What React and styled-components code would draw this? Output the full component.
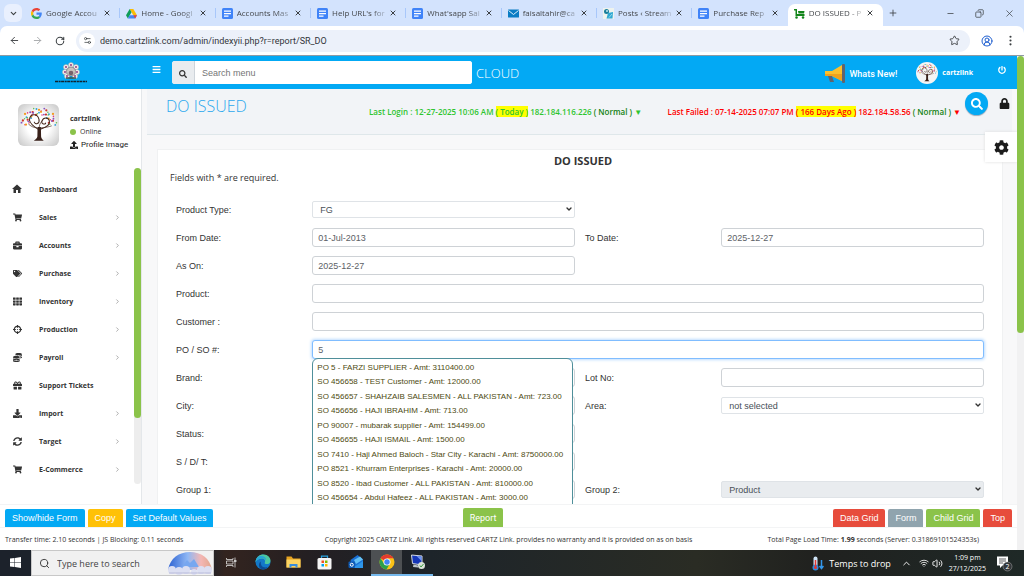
import { useState } from 'react'
import styled, { createGlobalStyle, css } from 'styled-components'
import {
  FaShoppingCart, FaBriefcase, FaTags, FaTh, FaCrosshairs, FaCoins, FaGift, FaDownload,
  FaSyncAlt, FaUpload, FaSearch, FaBars, FaPowerOff, FaLock, FaCog,
} from 'react-icons/fa'
import { MdHome } from 'react-icons/md'
import {
  ArrowLeft, ArrowRight, RotateCw, Star, CircleUserRound, EllipsisVertical, ChevronDown, ChevronUp,
  ChevronRight, X, Plus, Minus, Copy, Settings2, Search, Wifi, Volume2,
} from 'lucide-react'

const tabs = [
  { icon: 'google', title: 'Google Accou' },
  { icon: 'drive', title: 'Home - Googl' },
  { icon: 'docs', title: 'Accounts Mas' },
  { icon: 'docs', title: "Help URL's for" },
  { icon: 'docs', title: "What'sapp Sal" },
  { icon: 'mail', title: 'faisaltahir@ca' },
  { icon: 'posts', title: 'Posts ‹ Stream' },
  { icon: 'docs', title: 'Purchase Rep' },
  { icon: 'cart', title: 'DO ISSUED - P', active: true },
]

const menu = [
  { icon: MdHome, name: 'Dashboard', size: 12 },
  { icon: FaShoppingCart, name: 'Sales', more: true },
  { icon: FaBriefcase, name: 'Accounts', more: true },
  { icon: FaTags, name: 'Purchase', more: true },
  { icon: FaTh, name: 'Inventory', more: true },
  { icon: FaCrosshairs, name: 'Production', more: true },
  { icon: FaCoins, name: 'Payroll', more: true },
  { icon: FaGift, name: 'Support Tickets' },
  { icon: FaDownload, name: 'Import', more: true },
  { icon: FaSyncAlt, name: 'Target', more: true },
  { icon: FaShoppingCart, name: 'E-Commerce', more: true },
]

const suggestions = [
  'PO 5 - FARZI SUPPLIER - Amt: 3110400.00',
  'SO 456658 - TEST Customer - Amt: 12000.00',
  'SO 456657 - SHAHZAIB SALESMEN - ALL PAKISTAN - Amt: 723.00',
  'SO 456656 - HAJI IBRAHIM - Amt: 713.00',
  'PO 90007 - mubarak supplier - Amt: 154499.00',
  'SO 456655 - HAJI ISMAIL - Amt: 1500.00',
  'SO 7410 - Haji Ahmed Baloch - Star City - Karachi - Amt: 8750000.00',
  'PO 8521 - Khurram Enterprises - Karachi - Amt: 20000.00',
  'SO 8520 - Ibad Customer - ALL PAKISTAN - Amt: 810000.00',
  'SO 456654 - Abdul Hafeez - ALL PAKISTAN - Amt: 3000.00',
]

function Favicon({ kind }) {
  if (kind === 'google') return (
    <svg width="11" height="11" viewBox="0 0 48 48">
      <path fill="#EA4335" d="M24 9.500c3.500 0 6.700 1.200 9.200 3.600l6.900-6.900C35.900 2.400 30.500 0 24 0 14.600 0 6.500 5.400 2.600 13.200l8 6.200C12.400 13.700 17.700 9.500 24 9.500z" />
      <path fill="#4285F4" d="M47 24.500c0-1.600-.2-3.100-.4-4.500H24v9h12.900c-.6 3-2.200 5.500-4.700 7.200l7.700 6C44.400 38 47 31.800 47 24.500z" />
      <path fill="#FBBC05" d="M10.500 28.600a14.500 14.500 0 0 1 0-9.200l-8-6.200a24 24 0 0 0 0 21.600z" />
      <path fill="#34A853" d="M24 48c6.500 0 11.900-2.100 15.900-5.800l-7.700-6c-2.200 1.500-4.900 2.300-8.200 2.300-6.300 0-11.600-4.200-13.500-9.900l-8 6.200C6.500 42.600 14.600 48 24 48z" />
    </svg>
  )
  if (kind === 'drive') return (
    <svg width="11" height="11" viewBox="0 0 24 22">
      <path fill="#FBBC04" d="M8 1h8l8 14h-8z" />
      <path fill="#0F9D58" d="M8 1l4 7-8 14-4-7z" />
      <path fill="#4285F4" d="M8 15h16l-4 7H4z" />
      <path fill="#EA4335" d="M16 15h8l-4 7z" />
    </svg>
  )
  if (kind === 'docs') return (
    <svg width="11" height="11" viewBox="0 0 22 22">
      <rect width="22" height="22" rx="3" fill="#3f83f8" />
      <path d="M4 6h14M4 11h14M4 16h9" stroke="#fff" strokeWidth="2.500" />
    </svg>
  )
  if (kind === 'mail') return (
    <svg width="11" height="11" viewBox="0 0 22 22">
      <rect y="3" width="22" height="16" rx="1" fill="#0b7dc4" />
      <path d="M1 5l10 8 10-8" stroke="#d8eefb" strokeWidth="2" fill="none" />
    </svg>
  )
  if (kind === 'posts') return (
    <svg width="11" height="11" viewBox="0 0 22 22">
      <rect width="22" height="22" fill="#eef3ee" />
      <circle cx="7" cy="7" r="5" fill="#187e9b" />
      <circle cx="8" cy="6" r="2" fill="#bfe6ef" />
      <path d="M7 21l3-11 10-2-1 13z" fill="#2fa9d3" />
      <path d="M12 19l6-7" stroke="#fff" />
    </svg>
  )
  return (
    <svg width="11" height="11" viewBox="0 0 22 22">
      <path d="M0 2h6v10h15v4H3V5H0z" fill="#12851a" />
      <path d="M8 6h13l-1 5H9z" fill="#12851a" />
      <circle cx="5" cy="19" r="2.500" fill="#12851a" />
      <circle cx="18" cy="19" r="2.500" fill="#12851a" />
    </svg>
  )
}

const leafColors = ['#e6397b', '#f29a1f', '#2f9fd8', '#6abf4b', '#d0342c', '#8854c0']

// round crown: two arcs of leaves over a curled trunk
function Tree({ size }) {
  const leaves = []
  for (let i = 0; i < 46; i++) {
    const angle = Math.PI * (0.96 + (i % 23) / 22 * 1.08)
    const r = i < 23 ? 13 + (i * 7) % 4 : 9 + (i * 5) % 4
    leaves.push(
      <circle
        key={i}
        cx={20 + Math.cos(angle) * r * 1.15}
        cy={18 + Math.sin(angle) * r}
        r={0.8 + (i % 3) * 0.2}
        fill={leafColors[(i * 5) % 6]}
      />
    )
  }
  return (
    <svg width={size} height={size} viewBox="0 0 40 40">
      {leaves}
      <g fill="none" stroke="#46291c" strokeLinecap="round">
        <path d="M20 25c-3-2-9-5-10-10 0-7 8-8 10-1 1 5-4 6-5 3" strokeWidth="1.100" />
        <path d="M20 25c4-2 11-3 11-8 0-5-6-6-8-1-1 3 4 4 4 2" strokeWidth="1.100" />
        <path d="M20 25c0-4 1-7 3-9M18 23c-4 0-7-2-9-4M22 23c4 0 8-1 11-2" strokeWidth="0.700" />
      </g>
      <path d="M18.500 22h3.500l.2 10c.2 2 1.200 3 2.800 4.500H14.500c2-1.500 3.500-2.500 3.800-4.500z" fill="#39211a" />
    </svg>
  )
}

function CompanyLogo() {
  return (
    <svg width="34" height="22" viewBox="0 0 34 22">
      {[[17, 3], [12, 5], [22, 5], [11, 10], [23, 10], [13, 14], [21, 14]].map(([x, y]) => (
        <g key={x + '-' + y}>
          <circle cx={x} cy={y} r="2.600" fill="#efebe8" stroke="#a3a59d" strokeWidth="0.400" />
          <circle cx={x} cy={y} r="0.900" fill="#8a2878" />
        </g>
      ))}
      <circle cx="17" cy="9.500" r="4.500" fill="#c9c2be" stroke="#6d6566" strokeWidth="0.600" />
      <circle cx="17" cy="11" r="2.300" fill="#77616b" />
      <path d="M12 16h10" stroke="#3c5148" strokeWidth="1.500" />
      <path d="M1 19.500h32" stroke="#10222e" strokeWidth="1.700" strokeDasharray="3 0.600 2 0.500" />
    </svg>
  )
}

function Megaphone() {
  return (
    <svg width="22" height="22" viewBox="0 0 22 22">
      <path d="M4 13h4l2 6H6z" fill="#5f6470" />
      <path d="M1 8h7l10-6v16l-10-5H1z" fill="#fbc02d" />
      <path d="M1 11h17v7l-10-5H1z" fill="#f0a21c" />
      <rect x="18" y="1" width="3" height="19" rx="1" fill="#5f6470" />
    </svg>
  )
}

function WindowsLogo() {
  return (
    <svg width="11" height="11" viewBox="0 0 22 22" fill="#fff">
      <path d="M0 3l9-1v8H0zM10 2l12-2v10H10zM0 11h9v9l-9-1zM10 11h12v11l-12-2z" />
    </svg>
  )
}

function SearchArt() {
  return (
    <svg width="46" height="23" viewBox="0 0 46 23">
      <defs>
        <linearGradient id="sky" x1="0" x2="1">
          <stop offset="0" stopColor="#2d62d2" />
          <stop offset="0.450" stopColor="#8fb8f5" />
          <stop offset="0.750" stopColor="#f4b7b4" />
          <stop offset="1" stopColor="#e0a58c" />
        </linearGradient>
      </defs>
      <path d="M1 18C3 6 12 0 23 0s20 6 22 18z" fill="url(#sky)" />
      <path d="M15 15l5-7 3 3 4-4 5 8z" fill="#77a7f0" />
      <g fill="#dcdff2">
        <circle cx="5" cy="18" r="4" />
        <circle cx="12" cy="19" r="4" />
        <circle cx="19" cy="18" r="4" />
        <circle cx="27" cy="20" r="3" />
        <circle cx="34" cy="18" r="4" />
        <circle cx="41" cy="18" r="4" />
      </g>
      <path d="M2 21h42" stroke="#b8badb" />
    </svg>
  )
}

function TaskIcon({ kind }) {
  if (kind === 'view') return (
    <svg width="11" height="11" viewBox="0 0 22 22" fill="none" stroke="#e8e8e8" strokeWidth="1.500">
      <path d="M1 2v3h13V2M1 20v-3h13v3M1 8h13v6H1zM18 1v20" />
      <path d="M16 8h5" strokeWidth="3" />
    </svg>
  )
  if (kind === 'edge') return (
    <svg width="16" height="16" viewBox="0 0 32 32">
      <circle cx="16" cy="16" r="15" fill="#1378c8" />
      <path d="M1 16C2 6 9 1 17 1c9 0 14 7 14 12 0 6-5 8-9 7-3 0-3-2-2-4 1-3-1-7-6-7C8 9 3 12 1 16z" fill="#4cc8a0" />
      <path d="M1 16C2 7 8 3 14 4c7 1 9 6 8 9-2-3-5-5-9-4-5 0-9 3-12 7z" fill="#27a6d8" />
      <path d="M12 15c-2 8 4 14 14 11-4 4-9 6-14 4-5-3-6-12 0-15z" fill="#0c4c94" />
    </svg>
  )
  if (kind === 'files') return (
    <svg width="15" height="14" viewBox="0 0 30 28">
      <path d="M1 3h10l3 4h15v18H1z" fill="#e8a320" />
      <path d="M1 9h28v16H1z" fill="#fcd462" />
      <path d="M7 18h16v7h-4v-3h-8v3H7z" fill="#3a8ddb" />
    </svg>
  )
  if (kind === 'store') return (
    <svg width="15" height="15" viewBox="0 0 30 30">
      <path d="M9 8V2h12v6" fill="none" stroke="#2ba4e0" strokeWidth="2.500" />
      <rect x="1" y="6" width="28" height="23" rx="3" fill="#f5f5f5" />
      <path d="M9 11h5v5H9z" fill="#f25022" />
      <path d="M16 11h5v5h-5z" fill="#7fba00" />
      <path d="M9 18h5v5H9z" fill="#00a4ef" />
      <path d="M16 18h5v5h-5z" fill="#ffb900" />
    </svg>
  )
  if (kind === 'outlook') return (
    <svg width="16" height="16" viewBox="0 0 32 32">
      <path d="M5 12L19 2l11 9v17H7z" fill="#1b70d4" />
      <path d="M12 12L24 5l6 6-14 9z" fill="#64c0f4" />
      <path d="M9 28l21-14v14z" fill="#2e95ea" />
      <rect x="1" y="15" width="13" height="13" rx="2" fill="#0f5bb4" />
      <circle cx="7.500" cy="21.500" r="3" fill="none" stroke="#fff" strokeWidth="2" />
    </svg>
  )
  if (kind === 'chrome') return (
    <svg width="16" height="16" viewBox="0 0 32 32">
      <circle cx="16" cy="16" r="15" fill="#fbc116" />
      <path d="M16 16L3 8.500A15 15 0 0 1 29 8.500H16z" fill="#e33b2e" />
      <path d="M3 8.500A15 15 0 0 0 15 31l7-12-6 3-6-3z" fill="#2ca04c" />
      <circle cx="16" cy="16" r="7" fill="#fff" />
      <circle cx="16" cy="16" r="5.500" fill="#4285f4" />
    </svg>
  )
  return (
    <svg width="16" height="16" viewBox="0 0 32 32">
      <path d="M3 2l21 2v18L5 19z" fill="#1637b8" stroke="#d5dbe4" strokeWidth="2" />
      <path d="M13 4l10 1v9z" fill="#6f95f2" />
      <path d="M7 21l9 2v4l-10-1z" fill="#bcc4cc" />
      <circle cx="23" cy="23" r="7" fill="#d9e2d9" />
      <path d="M20 23l2 3 5-6" stroke="#3b9b3f" strokeWidth="2" fill="none" />
    </svg>
  )
}

function Thermometer() {
  return (
    <svg width="13" height="15" viewBox="0 0 26 30">
      <rect x="5" y="1" width="8" height="20" rx="4" fill="#cfe4f7" />
      <circle cx="9" cy="23" r="6" fill="#2d8ae0" />
      <path d="M9 8v14" stroke="#e2362f" strokeWidth="3" />
      <circle cx="9" cy="23" r="3" fill="#e2362f" />
      <path d="M21 8v16M17 20l4 5 4-5" stroke="#3396ea" strokeWidth="3" fill="none" />
    </svg>
  )
}

function Notification() {
  return (
    <svg width="17" height="17" viewBox="0 0 34 34">
      <path d="M2 3h22v18H13l-5 5v-5H2z" fill="#fff" />
      <path d="M6 8h14M6 12h14M6 16h8" stroke="#2a2c2e" strokeWidth="1.500" />
      <circle cx="23" cy="23" r="9" fill="#33373a" stroke="#aaa" />
      <text x="23" y="28" fill="#fff" fontSize="14" textAnchor="middle" fontFamily="Open Sans, sans-serif">2</text>
    </svg>
  )
}

function SelectBox({ id, filled, children }) {
  return (
    <SelectWrap>
      <Select id={id} $filled={filled}>{children}</Select>
      <ChevronDown size={8} strokeWidth={4} />
    </SelectWrap>
  )
}

function App() {
  const [search, setSearch] = useState('')
  const [order, setOrder] = useState('5')

  return (
    <Screen>
      <GlobalStyle />
      <TabStrip>
        <TabSearch aria-label="Search tabs"><ChevronDown size={9} strokeWidth={3} /></TabSearch>
        <Tabs>
          {tabs.map((tab, i) => (
            <Tab key={i} $active={tab.active}>
              <Favicon kind={tab.icon} />
              <TabTitle>{tab.title}</TabTitle>
              <IconButton aria-label={'Close ' + tab.title}><X size={8} strokeWidth={3} /></IconButton>
            </Tab>
          ))}
        </Tabs>
        <WindowTools>
          <IconButton aria-label="New tab"><Plus size={10} /></IconButton>
          <WindowButtons>
            <IconButton aria-label="Minimize"><Minus size={9} /></IconButton>
            <IconButton aria-label="Restore"><Restore size={9} /></IconButton>
            <IconButton aria-label="Close"><X size={11} strokeWidth={1.5} /></IconButton>
          </WindowButtons>
        </WindowTools>
      </TabStrip>

      <Toolbar>
        <NavButtons>
          <IconButton aria-label="Back"><ArrowLeft size={11} /></IconButton>
          <IconButton aria-label="Forward" $dim><ArrowRight size={11} /></IconButton>
          <IconButton aria-label="Reload"><RotateCw size={10} strokeWidth={2.5} /></IconButton>
        </NavButtons>
        <UrlBar>
          <SiteInfo aria-label="Site information"><Settings2 size={9} /></SiteInfo>
          <UrlInput aria-label="Address" defaultValue="demo.cartzlink.com/admin/indexyii.php?r=report/SR_DO" />
          <IconButton aria-label="Bookmark"><Star size={11} /></IconButton>
        </UrlBar>
        <IconButton aria-label="Profile" $blue><CircleUserRound size={12} /></IconButton>
        <IconButton aria-label="Menu"><EllipsisVertical size={13} /></IconButton>
      </Toolbar>

      <Page>
        <Site>
          <Header>
            <Brand><CompanyLogo /></Brand>
            <HeaderButton aria-label="Toggle menu"><FaBars size={9} /></HeaderButton>
            <SearchGroup>
              <SearchAddon aria-label="Search"><FaSearch size={8} /></SearchAddon>
              <SearchInput
                aria-label="Search menu"
                placeholder="Search menu"
                value={search}
                onChange={(e) => setSearch(e.target.value)}
              />
            </SearchGroup>
            <Cloud>CLOUD</Cloud>
            <WhatsNew href="#"><Megaphone />Whats New!</WhatsNew>
            <Account href="#"><Avatar><Tree size={20} /></Avatar>cartzlink</Account>
            <HeaderButton aria-label="Log out"><FaPowerOff size={8} /></HeaderButton>
          </Header>

          <Body>
            <Sidebar>
              <UserPanel>
                <Photo><Tree size={38} /></Photo>
                <UserInfo>
                  <strong>cartzlink</strong>
                  <span><Dot />Online</span>
                  <a href="#"><FaUpload size={8} />Profile Image</a>
                </UserInfo>
              </UserPanel>
              <MenuArea>
                <Menu>
                  {menu.map((item) => (
                    <MenuItem href="#" key={item.name}>
                      <MenuIcon><item.icon size={item.size || 9} /></MenuIcon>
                      <span>{item.name}</span>
                      {item.more && <ChevronRight size={7} color="#777" />}
                    </MenuItem>
                  ))}
                </Menu>
                <MenuScroll><MenuThumb /></MenuScroll>
              </MenuArea>
            </Sidebar>

            <Content>
              <TitleBar>
                <PageTitle>DO ISSUED</PageTitle>
                <Status $color="#2fc52f" $grow>
                  Last Login : 12-27-2025 10:06 AM <mark>( Today )</mark> 182.184.116.226 <em>( Normal )</em> ▼
                </Status>
                <Status $color="#ff0000">
                  Last Failed : 07-14-2025 07:07 PM <mark>( 166 Days Ago )</mark> 182.184.58.56 <em>( Normal )</em> ▼
                </Status>
                <RoundSearch aria-label="Find"><FaSearch size={12} /></RoundSearch>
                <LockButton aria-label="Lock"><FaLock size={11} /></LockButton>
              </TitleBar>
              <SettingsButton aria-label="Settings"><FaCog size={15} /></SettingsButton>

              <Card>
                <CardTitle>DO ISSUED</CardTitle>
                <Note>Fields with * are required.</Note>
                <Form>
                  <Label htmlFor="type">Product Type:</Label>
                  <Field><SelectBox id="type"><option>FG</option></SelectBox></Field>

                  <Label htmlFor="from" $start>From Date:</Label>
                  <Field><Input id="from" defaultValue="01-Jul-2013" /></Field>
                  <Label htmlFor="to">To Date:</Label>
                  <Field><Input id="to" defaultValue="2025-12-27" /></Field>

                  <Label htmlFor="ason" $start>As On:</Label>
                  <Field><Input id="ason" defaultValue="2025-12-27" /></Field>

                  <Label htmlFor="product" $start>Product:</Label>
                  <Field $wide><Input id="product" /></Field>

                  <Label htmlFor="customer" $start>Customer :</Label>
                  <Field $wide><Input id="customer" /></Field>

                  <Label htmlFor="order" $start>PO / SO #:</Label>
                  <Field $wide>
                    <Input id="order" autoFocus value={order} onChange={(e) => setOrder(e.target.value)} />
                    <Suggestions>
                      {suggestions.map((s) => <li key={s}>{s}</li>)}
                    </Suggestions>
                  </Field>

                  <Label htmlFor="brand" $start>Brand:</Label>
                  <Field><Input id="brand" /></Field>
                  <Label htmlFor="lot">Lot No:</Label>
                  <Field><Input id="lot" /></Field>

                  <Label htmlFor="city" $start>City:</Label>
                  <Field><Input id="city" /></Field>
                  <Label htmlFor="area">Area:</Label>
                  <Field><SelectBox id="area"><option>not selected</option></SelectBox></Field>

                  <Label htmlFor="status" $start>Status:</Label>
                  <Field><Input id="status" /></Field>

                  <Label htmlFor="sdt" $start>S / D/ T:</Label>
                  <Field><Input id="sdt" /></Field>

                  <Label htmlFor="group1" $start>Group 1:</Label>
                  <Field><Input id="group1" /></Field>
                  <Label htmlFor="group2">Group 2:</Label>
                  <Field><SelectBox id="group2" filled><option>Product</option></SelectBox></Field>
                </Form>
              </Card>
            </Content>
          </Body>

          <Actions>
            <ActionGroup>
              <Action $bg="#03a9f4">Show/hide Form</Action>
              <Action $bg="#ffc107">Copy</Action>
              <Action $bg="#03a9f4">Set Default Values</Action>
            </ActionGroup>
            <Action $bg="#8bc34a" $tall>Report</Action>
            <ActionGroup $end>
              <Action $bg="#e74c3c">Data Grid</Action>
              <Action $bg="#90a4ae">Form</Action>
              <Action $bg="#8bc34a">Child Grid</Action>
              <Action $bg="#e74c3c">Top</Action>
            </ActionGroup>
          </Actions>
          <Footer>
            <span>Transfer time: 2.10 seconds | JS Blocking: 0.11 seconds</span>
            <span>Copyright 2025 CARTZ Link. All rights reserved CARTZ Link. provides no warranty and it is provided on as on basis</span>
            <LoadTime>Total Page Load Time: <b>1.99</b> seconds (Server: 0.31869101524353s)</LoadTime>
          </Footer>
        </Site>
        <PageScroll><PageThumb /></PageScroll>
      </Page>

      <Taskbar>
        <TaskButton aria-label="Start"><WindowsLogo /></TaskButton>
        <TaskSearch>
          <Search size={11} />
          <input aria-label="Type here to search" placeholder="Type here to search" />
          <SearchArt />
        </TaskSearch>
        <TaskButton aria-label="Task view"><TaskIcon kind="view" /></TaskButton>
        <TaskButton aria-label="Edge"><TaskIcon kind="edge" /></TaskButton>
        <TaskButton aria-label="File Explorer"><TaskIcon kind="files" /></TaskButton>
        <TaskButton aria-label="Store"><TaskIcon kind="store" /></TaskButton>
        <TaskButton aria-label="Outlook"><TaskIcon kind="outlook" /></TaskButton>
        <TaskButton aria-label="Chrome" $open $current><TaskIcon kind="chrome" /></TaskButton>
        <TaskButton aria-label="Remote Desktop" $open><TaskIcon kind="remote" /></TaskButton>
        <Tray>
          <Weather><Thermometer />Temps to drop</Weather>
          <ChevronUp size={11} />
          <TrayIcons><Wifi size={10} /><Volume2 size={11} /></TrayIcons>
          <Clock><span>1:09 pm</span><span>27/12/2025</span></Clock>
          <Notification />
        </Tray>
      </Taskbar>
    </Screen>
  )
}

const GlobalStyle = createGlobalStyle`
  *{
    box-sizing: border-box;
  }
  body{
    margin: 0;
    font-family: "Open Sans", "Noto Sans", sans-serif;
    color: #333;
  }
  button, input, select{
    font-family: inherit;
    margin: 0;
  }
  a{
    color: inherit;
    text-decoration: none;
  }
  svg{
    flex-shrink: 0;
  }
`;

const arial = `"Liberation Sans", Arial, sans-serif`;

const Screen = styled.div`
  display: flex;
  flex-direction: column;
  height: 100vh;
  overflow: hidden;
  background: #d3e3fd;
`;

const IconButton = styled.button`
  display: flex;
  align-items: center;
  justify-content: center;
  padding: 0;
  border: 0;
  background: none;
  color: ${(p) => (p.$dim ? '#a5a7aa' : p.$blue ? '#1f5fd0' : '#3c4043')};
`;

const Restore = styled(Copy)`
  transform: scaleX(-1);
`;

const TabStrip = styled.div`
  display: flex;
  align-items: center;
  height: 26px;
  flex-shrink: 0;
  padding-left: 4px;
`;

const TabSearch = styled(IconButton)`
  width: 18px;
  height: 18px;
  border-radius: 6px;
  background: #e9f0fe;
  margin-right: 3px;
`;

const Tabs = styled.div`
  flex: 1;
  display: grid;
  grid-template-columns: repeat(9, minmax(0, 1fr));
  align-self: stretch;
`;

const Tab = styled.div`
  display: flex;
  align-items: center;
  padding: 0 9px 0 6px;
  position: relative;
  ${(p) => p.$active ? css`
    margin-top: 4px;
    padding-bottom: 4px;
    border-radius: 7px 7px 0 0;
    background: #fff;
  ` : css`
    &:not(:nth-last-child(2))::after{
      content: '';
      position: absolute;
      right: 0;
      top: 8px;
      height: 10px;
      border-right: 1px solid #a8c7fa;
    }
  `}
`;

const TabTitle = styled.span`
  flex: 1;
  margin-left: 4px;
  font-size: 8px;
  line-height: 12px;
  color: #45484c;
  white-space: nowrap;
  overflow: hidden;
  mask-image: linear-gradient(90deg, #000 70%, transparent);
`;

const WindowTools = styled.div`
  display: flex;
  align-items: center;
  justify-content: space-between;
  width: 141px;
  padding: 0 9px 0 5px;
`;

const WindowButtons = styled.div`
  display: flex;
  gap: 20px;
`;

const Toolbar = styled.div`
  display: flex;
  align-items: center;
  gap: 11px;
  height: 30px;
  flex-shrink: 0;
  padding: 0 7px 0 9px;
  background: #fff;
  border-radius: 7px 7px 0 0;
  border-bottom: 1px solid #8e9aa3;
`;

const NavButtons = styled.div`
  display: flex;
  gap: 12px;
`;

const UrlBar = styled.div`
  flex: 1;
  display: flex;
  align-items: center;
  height: 22px;
  padding: 0 10px 0 3px;
  border-radius: 11px;
  background: #ecf1fa;
`;

const SiteInfo = styled(IconButton)`
  width: 16px;
  height: 16px;
  border-radius: 50%;
  background: #fff;
`;

const UrlInput = styled.input`
  flex: 1;
  border: 0;
  padding: 0 5px;
  background: none;
  font-family: Roboto, sans-serif;
  font-size: 9px;
  line-height: 12px;
  color: #33363a;
  outline: none;
`;

const Page = styled.div`
  flex: 1;
  min-height: 0;
  display: flex;
  background: #fff;
`;

const Site = styled.div`
  flex: 1;
  min-width: 0;
  display: flex;
  flex-direction: column;
`;

const PageScroll = styled.div`
  width: 7px;
  background: #f1f1f2;
`;

const PageThumb = styled.div`
  height: 56%;
  border-radius: 4px;
  background: #8bc34a;
`;

const Header = styled.header`
  display: flex;
  align-items: center;
  height: 33px;
  flex-shrink: 0;
  background: #03a9f4;
  color: #fff;
`;

const Brand = styled.div`
  width: 141px;
  display: flex;
  justify-content: center;
`;

const HeaderButton = styled.button`
  display: flex;
  justify-content: center;
  width: 31px;
  padding: 0 0 6px;
  border: 0;
  background: none;
  color: #fff;
`;

const SearchGroup = styled.div`
  display: flex;
  width: 300px;
  height: 23px;
  border-radius: 3px;
  overflow: hidden;
  background: #fff;
`;

const SearchAddon = styled.button`
  width: 23px;
  padding: 0;
  border: 0;
  border-right: 1px solid #ced4da;
  background: #e9ecef;
  color: #333;
`;

const SearchInput = styled.input`
  flex: 1;
  padding: 0 7px;
  border: 0;
  outline: none;
  font-family: ${arial};
  font-size: 9px;
`;

const Cloud = styled.span`
  flex: 1;
  padding-left: 4px;
  font-size: 13px;
  font-weight: 300;
`;

const WhatsNew = styled.a`
  display: flex;
  align-items: center;
  gap: 3px;
  margin-right: 19px;
  padding-top: 3px;
  font-family: Roboto, sans-serif;
  font-size: 9px;
  font-weight: 500;
`;

const Account = styled.a`
  display: flex;
  align-items: center;
  gap: 4px;
  margin-right: 13px;
  font-size: 7px;
  font-weight: 700;
`;

const Avatar = styled.span`
  display: flex;
  align-items: center;
  justify-content: center;
  width: 22px;
  height: 22px;
  border-radius: 50%;
  background: #f4f4f4;
`;

const Body = styled.div`
  flex: 1;
  min-height: 0;
  display: flex;
  overflow: hidden;
`;

const Sidebar = styled.aside`
  width: 142px;
  flex-shrink: 0;
  border-right: 1px solid #e4e7ea;
`;

const UserPanel = styled.div`
  display: flex;
  gap: 11px;
  padding: 15px 0 18px 18px;
`;

const Photo = styled.div`
  display: flex;
  align-items: center;
  justify-content: center;
  width: 41px;
  height: 42px;
  border-radius: 6px;
  background: radial-gradient(#fff 40%, #c4c4c4);
`;

const UserInfo = styled.div`
  display: flex;
  flex-direction: column;
  height: 46px;
  padding-top: 8px;
  font-size: 8px;
  line-height: 13px;

  strong{
    font-size: 7px;
  }
  span, a{
    display: flex;
    align-items: center;
    gap: 3px;
  }
  span{
    font-size: 7px;
  }
  a{
    color: #222;
    font-family: Roboto, sans-serif;
  }
`;

const Dot = styled.i`
  width: 6px;
  height: 6px;
  margin-right: 1px;
  border-radius: 50%;
  background: #8bc34a;
`;

const MenuArea = styled.div`
  display: flex;
  height: 316px;
`;

const Menu = styled.nav`
  flex: 1;
  padding-top: 7px;
`;

const MenuItem = styled.a`
  display: flex;
  align-items: center;
  height: 28px;
  padding: 0 13px 0 11px;
  font-size: 7px;
  font-weight: 700;
  color: #333;

  span{
    flex: 1;
  }
`;

const MenuIcon = styled.i`
  display: flex;
  justify-content: center;
  width: 12px;
  margin-right: 16px;
`;

const MenuScroll = styled.div`
  width: 7px;
  border-radius: 4px;
  background: #ededed;
`;

const MenuThumb = styled.div`
  height: 79%;
  border-radius: 4px;
  background: #8bc34a;
`;

const Content = styled.main`
  flex: 1;
  min-width: 0;
  position: relative;
  padding: 0 5px;
  background: #f8f8f9;
`;

const TitleBar = styled.div`
  display: flex;
  align-items: center;
  height: 46px;
  padding-left: 19px;
  border-bottom: 1px solid #dfe7ea;
  background: #f2f4f7;
`;

const PageTitle = styled.h1`
  width: 203px;
  margin: 0;
  padding-bottom: 12px;
  font-size: 16px;
  font-weight: 300;
  line-height: 22px;
  color: #2ba8ee;
`;

const Status = styled.div`
  ${(p) => p.$grow && 'flex: 1;'}
  white-space: nowrap;
  font-size: 8px;
  font-weight: 600;
  line-height: 10px;
  color: ${(p) => p.$color};

  mark{
    background: #ffff00;
    color: inherit;
  }
  em{
    font-style: normal;
    color: #128212;
  }
`;

const RoundSearch = styled.button`
  display: flex;
  align-items: center;
  justify-content: center;
  width: 23px;
  height: 23px;
  margin: 0 8px 16px 4px;
  padding: 0;
  border: 0;
  border-radius: 50%;
  background: #03a9f4;
  color: #fff;
  box-shadow: 0 1px 1px #9ab;
`;

const LockButton = styled(IconButton)`
  width: 16px;
  margin-bottom: 16px;
  color: #1c1c1c;
`;

const SettingsButton = styled.button`
  position: absolute;
  top: 43px;
  right: 0;
  display: flex;
  align-items: center;
  justify-content: center;
  width: 32px;
  height: 30px;
  padding: 0;
  border: 0;
  background: #fff;
  color: #1c1c1c;
  box-shadow: 0 0 3px #ddd;
`;

const Card = styled.section`
  margin: 14px 9px 0 10px;
  padding: 4px 8px 20px 18px;
  border: 1px solid #f0f1f2;
  background: #fff;
`;

const CardTitle = styled.h2`
  margin: 0;
  text-align: center;
  padding-right: 4px;
  font-size: 11px;
  line-height: 14px;
`;

const Note = styled.p`
  margin: 4px 0 12px -6px;
  font-size: 9px;
  line-height: 12px;
`;

const Form = styled.form`
  display: grid;
  grid-template-columns: 1fr 2fr 1fr 2fr;
  grid-auto-rows: 28px;
`;

const Label = styled.label`
  ${(p) => p.$start && 'grid-column-start: 1;'}
  font-family: ${arial};
  font-size: 9px;
  line-height: 29px;
`;

const Field = styled.div`
  position: relative;
  padding: 4px 10px 0 0;
  ${(p) => p.$wide && 'grid-column: 2 / -1;'}
`;

const Input = styled.input`
  display: block;
  width: 100%;
  height: 19px;
  padding: 0 5px;
  border: 1px solid #ced2d6;
  border-radius: 3px;
  outline: none;
  background: #fff;
  font-family: ${arial};
  font-size: 9px;
  color: #5c6166;

  &:focus{
    border-color: #80bdff;
    box-shadow: 0 0 3px 1px #bfdeff;
  }
`;

const SelectWrap = styled.div`
  position: relative;
  padding-top: 1px;

  svg{
    position: absolute;
    right: 2px;
    top: 5px;
    pointer-events: none;
  }
`;

const Select = styled.select`
  display: block;
  appearance: none;
  width: 100%;
  height: 17px;
  padding: 0 7px;
  border: 1px solid #dfe3e7;
  border-radius: 2px;
  background: ${(p) => (p.$filled ? '#e9ecef' : '#fff')};
  font-family: ${arial};
  font-size: 9px;
  color: #495057;
`;

const Suggestions = styled.ul`
  position: absolute;
  z-index: 2;
  top: 22px;
  left: 0;
  display: grid;
  grid-auto-rows: 1fr;
  align-items: center;
  width: calc(40% - 12px);
  height: 149px;
  margin: 0;
  padding: 1px 4px;
  border: 1px solid #4f8f9a;
  border-radius: 6px 6px 0 0;
  background: #fff;
  list-style: none;
  white-space: nowrap;
  font-family: ${arial};
  font-size: 8px;
  color: #4d4a10;
`;

const Actions = styled.div`
  display: grid;
  grid-template-columns: 9fr auto 10fr;
  align-items: end;
  height: 24px;
  flex-shrink: 0;
  padding: 0 5px;
  border-top: 1px solid #f3f4f5;
  border-bottom: 1px solid #f3f4f5;
`;

const ActionGroup = styled.div`
  display: flex;
  gap: 3px;
  justify-content: ${(p) => (p.$end ? 'flex-end' : 'flex-start')};
`;

const Action = styled.button`
  height: ${(p) => (p.$tall ? 19 : 18)}px;
  padding: 0 7px;
  border: 0;
  border-radius: 2px 2px 0 0;
  background: ${(p) => p.$bg};
  color: #fff;
  font-family: ${(p) => (p.$tall ? 'Roboto, sans-serif' : arial)};
  font-size: 9px;
`;

const Footer = styled.footer`
  display: grid;
  grid-template-columns: 1fr auto 1fr;
  align-items: center;
  height: 22px;
  flex-shrink: 0;
  padding: 0 5px;
  white-space: nowrap;
  font-size: 7px;
`;

const LoadTime = styled.span`
  padding-right: 33px;
  text-align: right;
`;

const Taskbar = styled.div`
  display: flex;
  height: 26px;
  flex-shrink: 0;
  background: linear-gradient(90deg, #1c222b 0, #1c222b 20%, #33241f 22%, #241f22 30%, #1d242a 42%, #2a2c24 68%, #20211f 80%, #1f2927 100%);
  color: #fff;
`;

const TaskButton = styled.button`
  display: flex;
  align-items: center;
  justify-content: center;
  width: 31px;
  padding: 0;
  border: 0;
  border-bottom: 2px solid ${(p) => (p.$open ? '#76b9ed' : 'transparent')};
  background: ${(p) => (p.$current ? '#4d5053' : 'none')};
`;

const TaskSearch = styled.label`
  display: flex;
  align-items: center;
  gap: 7px;
  width: 183px;
  margin-right: 2px;
  padding: 1px 0 0 7px;
  border: 1px solid #c8c8c8;
  background: #f1f1f1;
  color: #333;

  input{
    flex: 1;
    min-width: 0;
    padding: 0;
    border: 0;
    outline: none;
    background: none;
    font-size: 9px;
  }
  input::placeholder{
    color: #444;
  }
`;

const Tray = styled.div`
  display: flex;
  align-items: center;
  margin-left: auto;
  gap: 10px;
  padding-right: 11px;
`;

const Weather = styled.div`
  display: flex;
  align-items: center;
  gap: 5px;
  font-size: 9px;
`;

const TrayIcons = styled.div`
  display: flex;
  gap: 3px;
  margin-left: -3px;
`;

const Clock = styled.div`
  display: flex;
  flex-direction: column;
  text-align: center;
  margin-left: -4px;
  font-size: 7px;
  line-height: 11px;
`;

export default App
